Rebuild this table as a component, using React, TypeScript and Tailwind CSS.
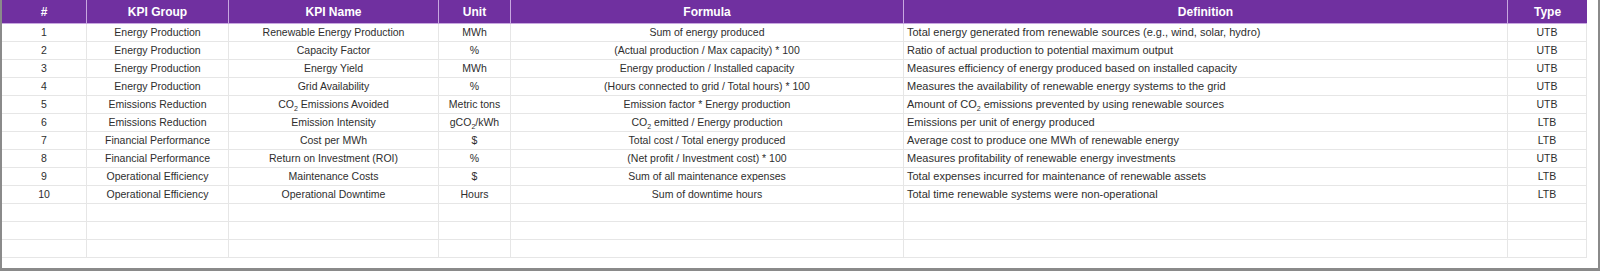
import React from "react";

type Row = {
  n: string;
  group: string;
  name: React.ReactNode;
  unit: React.ReactNode;
  formula: React.ReactNode;
  def: React.ReactNode;
  type: string;
};

const Sub = ({ c }: { c: string }) => (
  <span className="text-[7px] relative top-[3px]">{c}</span>
);

const rows: Row[] = [
  { n: "1", group: "Energy Production", name: "Renewable Energy Production", unit: "MWh", formula: "Sum of energy produced", def: "Total energy generated from renewable sources (e.g., wind, solar, hydro)", type: "UTB" },
  { n: "2", group: "Energy Production", name: "Capacity Factor", unit: "%", formula: "(Actual production / Max capacity) * 100", def: "Ratio of actual production to potential maximum output", type: "UTB" },
  { n: "3", group: "Energy Production", name: "Energy Yield", unit: "MWh", formula: "Energy production / Installed capacity", def: "Measures efficiency of energy produced based on installed capacity", type: "UTB" },
  { n: "4", group: "Energy Production", name: "Grid Availability", unit: "%", formula: "(Hours connected to grid / Total hours) * 100", def: "Measures the availability of renewable energy systems to the grid", type: "UTB" },
  { n: "5", group: "Emissions Reduction", name: <>CO<Sub c="2" /> Emissions Avoided</>, unit: "Metric tons", formula: "Emission factor * Energy production", def: <>Amount of CO<Sub c="2" /> emissions prevented by using renewable sources</>, type: "UTB" },
  { n: "6", group: "Emissions Reduction", name: "Emission Intensity", unit: <>gCO<Sub c="2" />/kWh</>, formula: <>CO<Sub c="2" /> emitted / Energy production</>, def: "Emissions per unit of energy produced", type: "LTB" },
  { n: "7", group: "Financial Performance", name: "Cost per MWh", unit: "$", formula: "Total cost / Total energy produced", def: "Average cost to produce one MWh of renewable energy", type: "LTB" },
  { n: "8", group: "Financial Performance", name: "Return on Investment (ROI)", unit: "%", formula: "(Net profit / Investment cost) * 100", def: "Measures profitability of renewable energy investments", type: "UTB" },
  { n: "9", group: "Operational Efficiency", name: "Maintenance Costs", unit: "$", formula: "Sum of all maintenance expenses", def: "Total expenses incurred for maintenance of renewable assets", type: "LTB" },
  { n: "10", group: "Operational Efficiency", name: "Operational Downtime", unit: "Hours", formula: "Sum of downtime hours", def: "Total time renewable systems were non-operational", type: "LTB" },
];

const headers = ["#", "KPI Group", "KPI Name", "Unit", "Formula", "Definition", "Type"];

export default function App() {
  const cell = "h-[18px] border-r border-b border-[#e6e6e6] flex items-center whitespace-nowrap overflow-hidden text-[#2e2e2e]";
  const c = `${cell} justify-center text-[10.5px]`;
  return (
    <div
      className="w-[1600px] h-[271px] bg-white border-l-2 border-r-2 border-b-[3px] border-[#8a8a8a] overflow-hidden"
      style={{ fontFamily: '"Liberation Sans", Arial, sans-serif' }}
    >
      <div className="grid grid-cols-[85px_142px_210px_72px_393px_604px_79px] w-[1585px]">
        {headers.map((h, i) => (
          <div
            key={h}
            className={`h-[24px] bg-[#7030a0] text-white font-bold text-[12px] flex items-center justify-center border-b border-[#c8a8e0] ${i < 6 ? "border-r border-r-[#c8a8e0]" : ""}`}
          >
            <span>{h}</span>
          </div>
        ))}
        {rows.map((r) => (
          <React.Fragment key={r.n}>
            <div className={c}><span>{r.n}</span></div>
            <div className={c}><span>{r.group}</span></div>
            <div className={c}><span>{r.name}</span></div>
            <div className={c}><span>{r.unit}</span></div>
            <div className={c}><span>{r.formula}</span></div>
            <div className={`${cell} justify-start pl-[3px] text-[11px]`}><span>{r.def}</span></div>
            <div className={c}><span>{r.type}</span></div>
          </React.Fragment>
        ))}
        {[0, 1, 2].map((k) => (
          <React.Fragment key={`e${k}`}>
            {headers.map((h) => (
              <div key={h} className={cell} />
            ))}
          </React.Fragment>
        ))}
      </div>
    </div>
  );
}
